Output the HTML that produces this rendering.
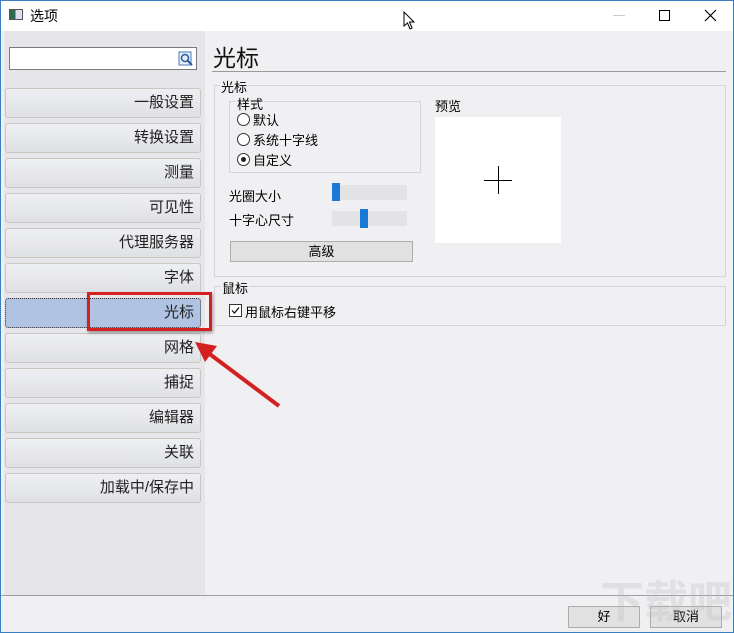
<!DOCTYPE html>
<html style="width:734px;height:633px;overflow:hidden"><head><meta charset="utf-8"><style>
*{margin:0;padding:0;box-sizing:border-box}
body{width:734px;height:633px;overflow:hidden;background:#f0eff2;font-family:"Liberation Sans","Noto Sans CJK SC",sans-serif;font-size:13px;color:#000;position:relative}
.a{position:absolute;white-space:nowrap}
.btn{position:absolute;left:5px;width:196px;height:30px;border:1px solid #c8c8c0;border-radius:3px;background:linear-gradient(#eeeff2,#e6e7ea 60%,#dfe0e4);text-align:right;padding-right:6px;line-height:28px;font-size:15px;color:#222}
.frame{position:absolute;border:1px solid #d6d4d8}
.rad{position:absolute;width:13px;height:13px;border:1px solid #333;border-radius:50%;background:#fff}
</style></head><body>
<div class="a" style="left:0;top:0;width:734px;height:31px;background:#fff;border-top:1px solid #3a7fc0"></div>
<div class="a" style="left:9px;top:9px;width:14px;height:11px;border:1px solid #555;background:linear-gradient(90deg,#2d6a50 0 45%,#dde 45%)"></div>
<div class="a" style="left:30px;top:6px;font-size:14px">选项</div>
<svg class="a" style="left:403px;top:11px" width="14" height="20"><path d="M1 1 L1 15 L4.5 12 L7 18 L9 17 L6.5 11 L11 11 Z" fill="#fff" stroke="#000" stroke-width="1"/></svg>
<div class="a" style="left:613px;top:15px;width:12px;height:1px;background:#ccc"></div>
<div class="a" style="left:659px;top:10px;width:11px;height:11px;border:1px solid #000"></div>
<svg class="a" style="left:704px;top:9px" width="13" height="13"><path d="M1 1L12 12M12 1L1 12" stroke="#000" stroke-width="1.2"/></svg>
<div class="a" style="left:0;top:0;width:734px;height:633px;border:1px solid #3a7fc0;border-top:none;pointer-events:none;z-index:5"></div>

<div class="a" style="left:4px;top:31px;width:201px;height:564px;background:#e6e6ea"></div>
<div class="a" style="left:9px;top:47px;width:188px;height:23px;background:#fff;border:1px solid #7a7a7a"></div>
<svg class="a" style="left:178px;top:50px" width="17" height="17"><rect x="1" y="2" width="12" height="13" fill="#e6eefa" stroke="#4a7ab8"/><circle cx="7" cy="8" r="3.5" fill="none" stroke="#2a5a98" stroke-width="1.5"/><path d="M9.5 10.5L14 15" stroke="#2a5a98" stroke-width="2"/></svg>

<div class="btn" style="top:88px">一般设置</div>
<div class="btn" style="top:123px">转换设置</div>
<div class="btn" style="top:158px">测量</div>
<div class="btn" style="top:193px">可见性</div>
<div class="btn" style="top:228px">代理服务器</div>
<div class="btn" style="top:263px">字体</div>
<div class="btn" style="top:298px;background:#b0c3e2;border:1px dotted #333">光标</div>
<div class="btn" style="top:333px">网格</div>
<div class="btn" style="top:368px">捕捉</div>
<div class="btn" style="top:403px">编辑器</div>
<div class="btn" style="top:438px">关联</div>
<div class="btn" style="top:473px">加载中/保存中</div>

<div class="a" style="left:87px;top:292px;width:125px;height:39px;border:3px solid #d42020;box-shadow:1px 2px 3px rgba(0,0,0,.35)"></div>
<svg class="a" style="left:185px;top:330px" width="100" height="80"><path d="M94 76 L22 22" stroke="#d42020" stroke-width="4"/><path d="M10 12 L32 16 L20 32 Z" fill="#d42020"/></svg>

<div class="a" style="left:213px;top:39px;font-size:23px;color:#111">光标</div>
<div class="a" style="left:212px;top:71px;width:514px;height:1px;background:#999"></div>

<div class="frame" style="left:214px;top:85px;width:512px;height:192px"></div>
<div class="a" style="left:220px;top:77px;background:#f0eff2;padding:0 1px">光标</div>
<div class="frame" style="left:229px;top:101px;width:192px;height:72px"></div>
<div class="a" style="left:236px;top:94px;background:#f0eff2;padding:0 1px">样式</div>
<div class="rad" style="left:237px;top:113px"></div><div class="a" style="left:253px;top:110px">默认</div>
<div class="rad" style="left:237px;top:133px"></div><div class="a" style="left:253px;top:130px">系统十字线</div>
<div class="rad" style="left:237px;top:153px"></div><div class="a" style="left:241px;top:157px;width:5px;height:5px;border-radius:50%;background:#222"></div><div class="a" style="left:253px;top:150px">自定义</div>

<div class="a" style="left:229px;top:186px">光圈大小</div>
<div class="a" style="left:332px;top:185px;width:75px;height:15px;background:#e3e3e6"></div>
<div class="a" style="left:332px;top:183px;width:8px;height:18px;background:#1a78d6"></div>
<div class="a" style="left:229px;top:210px">十字心尺寸</div>
<div class="a" style="left:332px;top:211px;width:75px;height:15px;background:#e3e3e6"></div>
<div class="a" style="left:360px;top:209px;width:8px;height:19px;background:#1a78d6"></div>
<div class="a" style="left:230px;top:241px;width:183px;height:21px;background:#e1e1e1;border:1px solid #adadad;text-align:center;line-height:19px">高级</div>

<div class="a" style="left:435px;top:96px">预览</div>
<div class="a" style="left:435px;top:117px;width:126px;height:126px;background:#fff"></div>
<div class="a" style="left:484px;top:180px;width:28px;height:1px;background:#000"></div>
<div class="a" style="left:498px;top:166px;width:1px;height:28px;background:#000"></div>

<div class="frame" style="left:214px;top:286px;width:512px;height:40px"></div>
<div class="a" style="left:221px;top:278px;background:#f0eff2;padding:0 1px">鼠标</div>
<div class="a" style="left:229px;top:304px;width:13px;height:13px;border:1px solid #333;background:#fff"></div>
<svg class="a" style="left:230px;top:305px" width="11" height="11"><path d="M2 5.5L4.5 8L9 2.5" stroke="#000" fill="none" stroke-width="1.2"/></svg>
<div class="a" style="left:245px;top:302px">用鼠标右键平移</div>

<div class="a" style="left:1px;top:595px;width:732px;height:1px;background:#a0a0a0"></div>
<div class="a" style="left:568px;top:606px;width:72px;height:22px;background:#e1e1e1;border:1px solid #adadad;text-align:center;line-height:20px">好</div>
<div class="a" style="left:650px;top:606px;width:72px;height:22px;background:#e1e1e1;border:1px solid #adadad;text-align:center;line-height:20px">取消</div>
<div class="a" style="left:600px;top:578px;font-size:44px;line-height:50px;font-weight:bold;color:rgba(190,190,190,.3)">下载吧</div>
</body></html>
